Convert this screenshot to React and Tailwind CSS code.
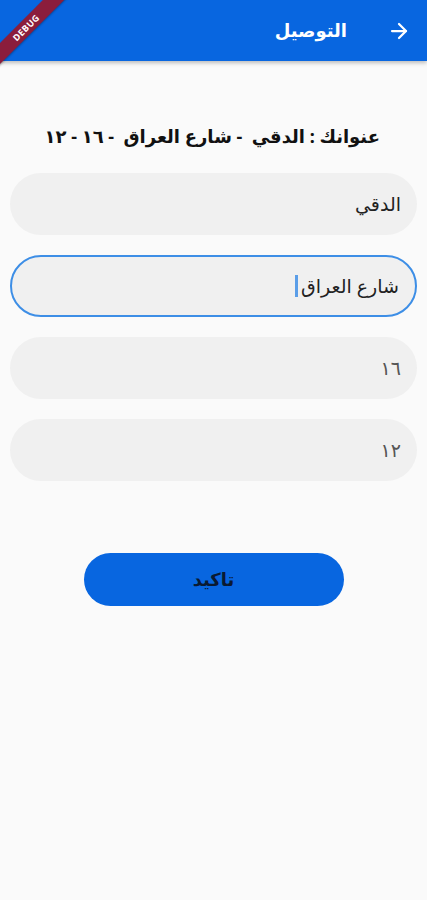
import { ArrowRight } from 'lucide-react'

const FIELDS = [
  { value: 'الدقي', focused: false },
  { value: 'شارع العراق', focused: true },
  { value: '١٦', focused: false, muted: true },
  { value: '١٢', focused: false, muted: true },
]

export default function App() {
  return (
    <div
      dir="rtl"
      className="relative w-[427px] h-[900px] overflow-hidden bg-[#fafafa]"
      style={{ fontFamily: '"Noto Sans", "DejaVu Sans", sans-serif' }}
    >
      {/* ── App bar ── */}
      <header className="h-[61px] bg-[#0866e0] flex items-center px-4 shadow-[0_2px_4px_rgba(0,0,0,0.25)]">
        <ArrowRight className="w-6 h-6 text-white ml-[40px]" strokeWidth={2.25} />
        <h1 className="text-white text-[18px] font-semibold">التوصيل</h1>
      </header>

      {/* ── Content ── */}
      <main className="px-[10px] pt-[60px]">
        <p className="text-[18px] font-bold text-[#111] pr-[37px] leading-[30px] whitespace-pre">
          {'عنوانك : الدقي  - شارع العراق  - ١٦ - ١٢'}
        </p>

        <div className="mt-[22px] flex flex-col gap-[20px]">
          {FIELDS.map((f, i) => (
            <div
              key={i}
              className={`h-[62px] rounded-full bg-[#f0f0f0] flex items-center px-[16px] ${
                f.focused ? 'border-2 border-[#3d8ee6]' : ''
              }`}
            >
              <span className={`text-[19px] ${f.muted ? 'text-[#555]' : 'text-[#222]'}`}>{f.value}</span>
              {f.focused && <span className="w-[3px] h-[22px] bg-[#5b9ee8] mr-[3px]" />}
            </div>
          ))}
        </div>

        <div className="flex justify-center mt-[72px]">
          <button className="w-[260px] h-[53px] rounded-full bg-[#0866e0] text-[#0a1a33] text-[18px] font-bold">
            تاكيد
          </button>
        </div>
      </main>

      {/* ── Debug ribbon ── */}
      <div
        dir="ltr"
        className="absolute top-[20px] left-[-34px] w-[120px] h-[15px] bg-[#8b1d3c] -rotate-45 flex items-center justify-center shadow-[0_1px_2px_rgba(0,0,0,0.3)]"
      >
        <span className="text-white text-[9px] font-bold tracking-wider">DEBUG</span>
      </div>
    </div>
  )
}
